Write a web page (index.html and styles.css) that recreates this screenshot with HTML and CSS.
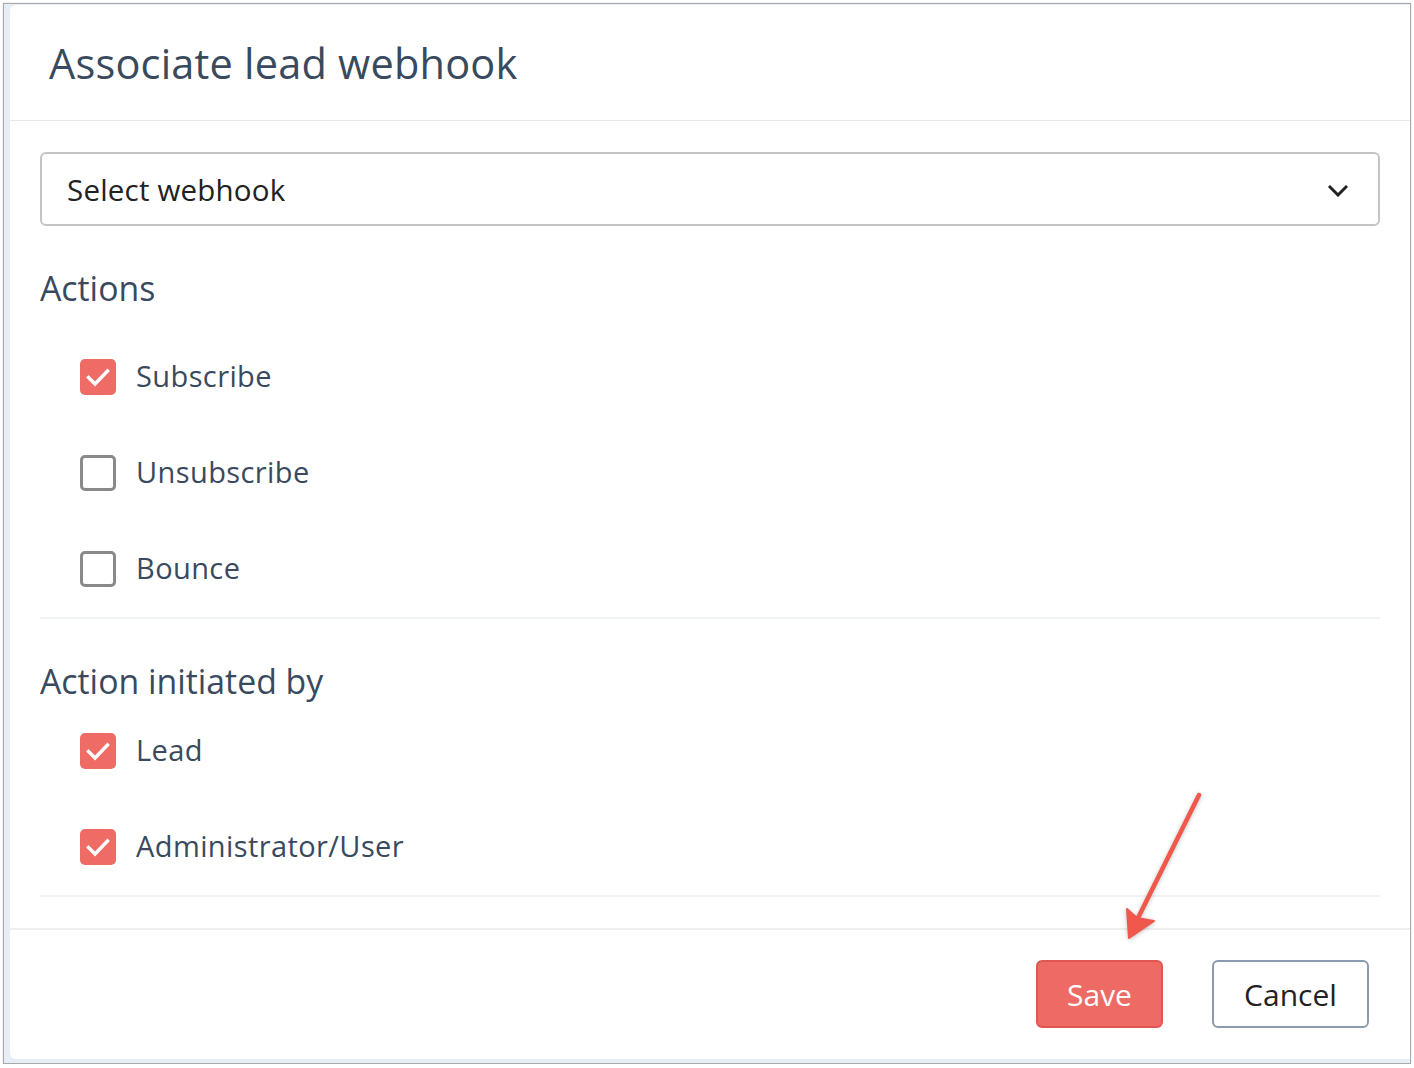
FILE: index.html
```html
<!DOCTYPE html>
<html lang="en">
<head>
<meta charset="utf-8">
<title>Associate lead webhook</title>
<link rel="stylesheet" href="styles.css">
</head>
<body>
<div class="screen">
  <div class="dialog">
    <header class="dialog-header">
      <h1 class="dialog-title">Associate lead webhook</h1>
    </header>
    <div class="dialog-body">
      <div class="select">
        <span class="select-text">Select webhook</span>
        <svg class="chevron" width="20" height="12" viewBox="0 0 20 12"><path d="M2 2 L10 10 L18 2" fill="none" stroke="#222" stroke-width="3" stroke-linecap="square"/></svg>
      </div>

      <section class="group group-actions">
        <h2 class="group-title">Actions</h2>
        <div class="rows">
          <label class="row"><span class="box checked"><svg width="36" height="36" viewBox="0 0 36 36"><path d="M8.5 18.5 L15 25 L27.5 12" fill="none" stroke="#fff" stroke-width="3.4" stroke-linecap="square"/></svg></span><span class="label">Subscribe</span></label>
          <label class="row"><span class="box"></span><span class="label">Unsubscribe</span></label>
          <label class="row"><span class="box"></span><span class="label">Bounce</span></label>
        </div>
      </section>

      <section class="group group-init">
        <h2 class="group-title">Action initiated by</h2>
        <div class="rows">
          <label class="row"><span class="box checked"><svg width="36" height="36" viewBox="0 0 36 36"><path d="M8.5 18.5 L15 25 L27.5 12" fill="none" stroke="#fff" stroke-width="3.4" stroke-linecap="square"/></svg></span><span class="label">Lead</span></label>
          <label class="row"><span class="box checked"><svg width="36" height="36" viewBox="0 0 36 36"><path d="M8.5 18.5 L15 25 L27.5 12" fill="none" stroke="#fff" stroke-width="3.4" stroke-linecap="square"/></svg></span><span class="label">Administrator/User</span></label>
        </div>
      </section>
    </div>
    <footer class="dialog-footer">
      <button class="btn btn-save">Save</button>
      <button class="btn btn-cancel">Cancel</button>
    </footer>
    <svg class="arrow" width="100" height="170" viewBox="1110 780 100 170">
      <line x1="1199" y1="795" x2="1136" y2="922" stroke="#f0584c" stroke-width="4.5" stroke-linecap="round"/>
      <polygon points="1129,938 1127,909 1137,918 1154,921" fill="#f0584c" stroke="#f0584c" stroke-width="2" stroke-linejoin="round"/>
    </svg>
  </div>
</div>
</body>
</html>
```

FILE: styles.css
```css
* { box-sizing: border-box; }
html, body { margin: 0; padding: 0; background: #fff; }
body {
  font-family: "Open Sans", "Noto Sans", sans-serif;
  color: #394a5e;
}
.screen {
  position: relative;
  margin: 3px 0 0 3px;
  width: 1408px;
  height: 1061px;
  border: 1px solid #a9a9a9;
  background: #e7edf4;
  padding: 1px 0 4px 6px;
  box-shadow: 0 0 2px rgba(0,0,0,0.15);
}
.dialog {
  position: relative;
  background: #fff;
  height: 100%;
  border-radius: 6px 0 0 6px;
  display: flex;
  flex-direction: column;
}
.dialog-header {
  height: 116px;
  border-bottom: 1px solid #e6e8ea;
  display: flex;
  align-items: center;
  padding-left: 39px;
}
.dialog-title {
  margin: 0;
  font-weight: 400;
  font-size: 41.5px;
  line-height: 52px;
  color: #394a5e;
  letter-spacing: 0.2px;
}
.dialog-body {
  padding: 31px 30px 0 30px;
}
.select {
  height: 74px;
  border: 2px solid #c4c4c4;
  border-radius: 6px;
  display: flex;
  align-items: center;
  justify-content: space-between;
  padding: 0 30px 0 25px;
}
.select-text {
  font-size: 29.5px;
  color: #222;
  letter-spacing: 0.2px;
}
.chevron { display: block; margin-top: 4px; }
.group { border-bottom: 2px solid #f0f3f6; }
.group-title {
  margin: 0;
  font-weight: 400;
  font-size: 33.8px;
  line-height: 44px;
  color: #394a5e;
}
.group-actions { padding-top: 40px; }
.group-actions .rows { padding-top: 19px; }
.group-init { padding-top: 40px; }
.rows { display: flex; flex-direction: column; }
.row {
  height: 96px;
  display: flex;
  align-items: center;
  padding-left: 40px;
  gap: 20px;
}
.box {
  width: 36px;
  height: 36px;
  border: 3px solid #8a8a8a;
  border-radius: 5px;
  flex: none;
  position: relative;
}
.box.checked {
  border: none;
  background: #ef6b66;
}
.box svg { display: block; }
.label {
  font-size: 29px;
  color: #394a5e;
  letter-spacing: 0.4px;
  margin-top: -3px;
}
.dialog-footer {
  margin-top: 31px;
  border-top: 2px solid #eeeeee;
  padding: 30px 41px 0 0;
  display: flex;
  justify-content: flex-end;
  gap: 49px;
}
.btn {
  height: 68px;
  border-radius: 6px;
  font-family: "Open Sans", "Noto Sans", sans-serif;
  font-size: 30px;
  padding: 0;
  cursor: pointer;
}
.btn-save {
  width: 127px;
  background: #ee6a65;
  border: 2px solid #e05650;
  color: #fff;
}
.btn-cancel {
  width: 157px;
  background: #fff;
  border: 2px solid #8c9ab0;
  color: #222;
}
.arrow {
  position: absolute;
  left: 1100px;
  top: 775px;
  overflow: visible;
  filter: drop-shadow(0 1px 2px rgba(0,0,0,0.25));
}
```
